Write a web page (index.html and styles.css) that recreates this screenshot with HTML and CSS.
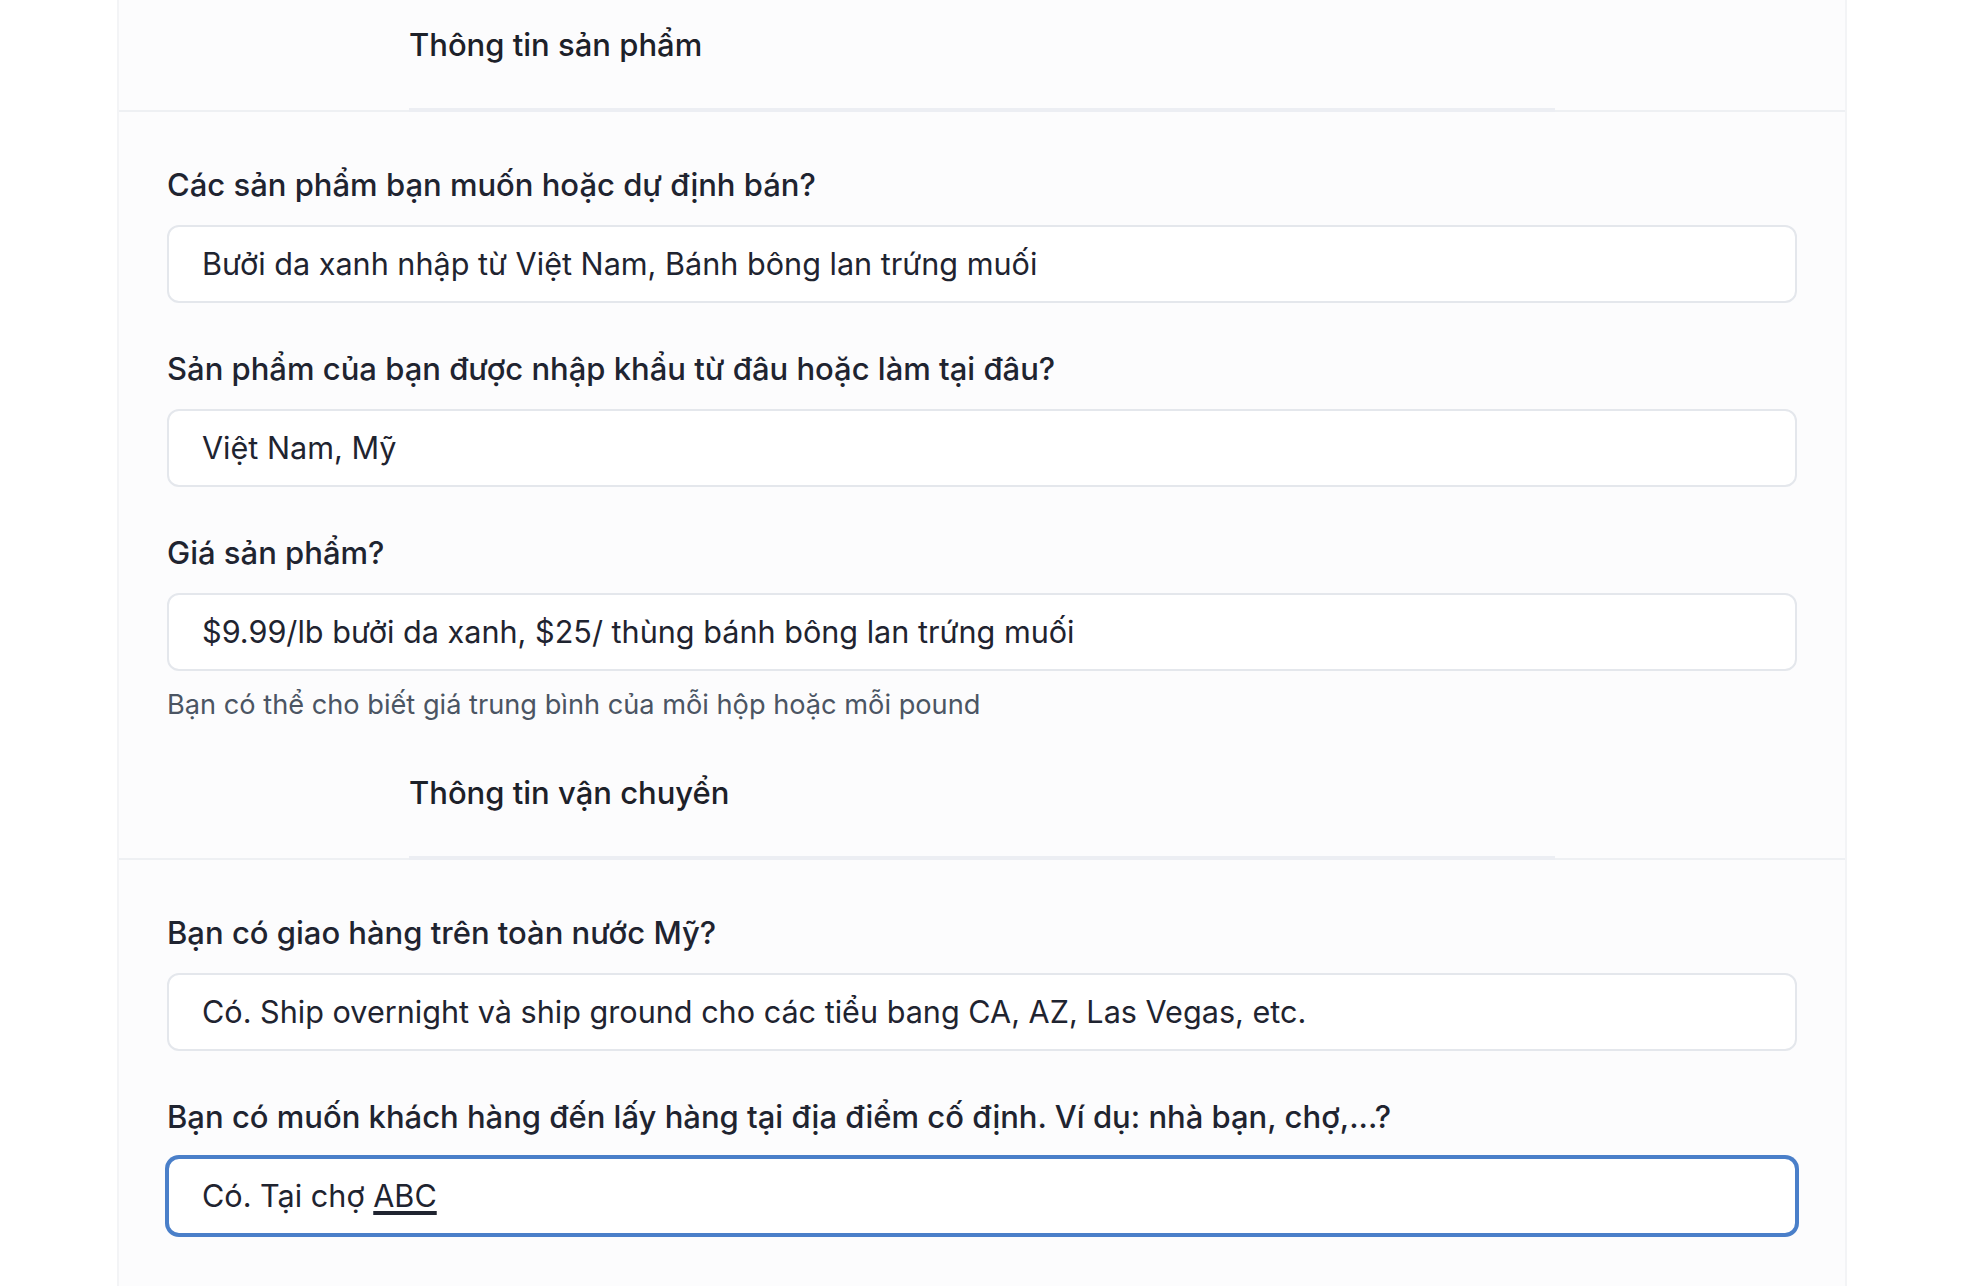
FILE: index.html
```html
<!DOCTYPE html>
<html lang="vi">
<head>
<meta charset="utf-8">
<title>Form</title>
<link rel="stylesheet" href="styles.css">
</head>
<body>
<div class="page">
  <div class="card">
    <section class="section">
      <div class="section-head">
        <div class="tab">Thông tin sản phẩm</div>
      </div>
      <div class="section-body">
        <div class="field">
          <div class="label">Các sản phẩm bạn muốn hoặc dự định bán?</div>
          <div class="input">Bưởi da xanh nhập từ Việt Nam, Bánh bông lan trứng muối</div>
        </div>
        <div class="field">
          <div class="label">Sản phẩm của bạn được nhập khẩu từ đâu hoặc làm tại đâu?</div>
          <div class="input">Việt Nam, Mỹ</div>
        </div>
        <div class="field">
          <div class="label">Giá sản phẩm?</div>
          <div class="input">$9.99/lb bưởi da xanh, $25/ thùng bánh bông lan trứng muối</div>
          <p class="help">Bạn có thể cho biết giá trung bình của mỗi hộp hoặc mỗi pound</p>
        </div>
      </div>
    </section>
    <section class="section">
      <div class="section-head">
        <div class="tab">Thông tin vận chuyển</div>
      </div>
      <div class="section-body">
        <div class="field">
          <div class="label">Bạn có giao hàng trên toàn nước Mỹ?</div>
          <div class="input">Có. Ship overnight và ship ground cho các tiểu bang CA, AZ, Las Vegas, etc.</div>
        </div>
        <div class="field">
          <div class="label">Bạn có muốn khách hàng đến lấy hàng tại địa điểm cố định. Ví dụ: nhà bạn, chợ,...?</div>
          <div class="input input-focus">Có. Tại chợ <span class="compose">ABC</span></div>
        </div>
      </div>
    </section>
  </div>
</div>
</body>
</html>
```

FILE: styles.css
```css
* {
  box-sizing: border-box;
}

html, body {
  margin: 0;
  padding: 0;
  background: #ffffff;
}

body {
  font-family: Inter, "Noto Sans", "Liberation Sans", sans-serif;
  color: #1f2430;
}

.page {
  padding-left: 117px;
  height: 1286px;
  overflow: hidden;
}

.card {
  width: 1730px;
  min-height: 1286px;
  background: #fcfcfd;
  border-left: 2px solid #f3f4f6;
  border-right: 2px solid #f3f4f6;
}

.section-head {
  display: flex;
  justify-content: center;
  padding-top: 25px;
  border-bottom: 2px solid #eef0f3;
}

.tab {
  width: 1146px;
  font-size: 31px;
  line-height: 40px;
  font-weight: 500;
  color: #1d2129;
  padding-bottom: 43px;
  border-bottom: 4px solid #eceef3;
  margin-bottom: -2px;
}

.section-body {
  padding: 53px 48px 25px;
  display: flex;
  flex-direction: column;
  gap: 46px;
}

.label {
  font-size: 31px;
  line-height: 40px;
  font-weight: 500;
  color: #1f2430;
  margin-bottom: 20px;
}

.input {
  height: 78px;
  display: block;
  padding: 0 33px;
  line-height: 74px;
  background: #ffffff;
  border: 2px solid #e4e7ec;
  border-radius: 12px;
  font-size: 30.6px;
  color: #1f2430;
  white-space: nowrap;
}

.input-focus {
  border-color: #4a7fc9;
  box-shadow: 0 0 0 2px #4a7fc9;
}

.compose {
  text-decoration: underline;
  text-decoration-thickness: 4px;
  text-underline-offset: 4px;
}

.help {
  margin: 16px 0 0;
  font-size: 27.2px;
  line-height: 36px;
  color: #4b5563;
}
```
